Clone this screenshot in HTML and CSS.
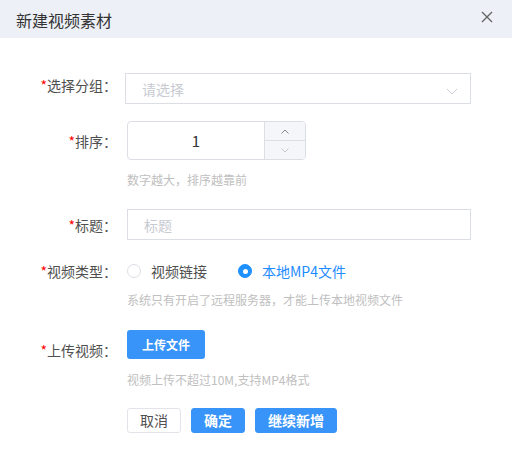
FILE: index.html
```html
<!DOCTYPE html>
<html lang="zh">
<head>
<meta charset="utf-8">
<link rel="stylesheet" href="styles.css">
</head>
<body>
<div class="dialog">
  <div class="header">
    <span class="title">新建视频素材</span>
    <svg class="close" width="12" height="12" viewBox="0 0 12 12"><path d="M1 1L11 11M11 1L1 11" stroke="#666" stroke-width="1.4" fill="none"/></svg>
  </div>
  <div class="form">
    <div class="item item-1">
      <label class="label label-1"><i>*</i>选择分组：</label>
      <div class="content">
        <div class="select">
          <span class="placeholder">请选择</span>
          <svg class="chev" width="12" height="7" viewBox="0 0 12 7"><path d="M1 1L6 6L11 1" stroke="#c9ccd4" stroke-width="1" fill="none"/></svg>
        </div>
      </div>
    </div>
    <div class="item item-2">
      <label class="label label-2"><i>*</i>排序：</label>
      <div class="content">
        <div class="number">
          <span class="num-val">1</span>
          <div class="spin">
            <div class="spin-btn"><svg width="8" height="5" viewBox="0 0 8 5"><path d="M0.5 4.5L4 1L7.5 4.5" stroke="#888" stroke-width="1" fill="none"/></svg></div>
            <div class="spin-btn spin-down"><svg width="8" height="5" viewBox="0 0 8 5"><path d="M0.5 0.5L4 4L7.5 0.5" stroke="#c6c9d0" stroke-width="1" fill="none"/></svg></div>
          </div>
        </div>
        <div class="hint hint-a">数字越大，排序越靠前</div>
      </div>
    </div>
    <div class="item item-3">
      <label class="label label-3"><i>*</i>标题：</label>
      <div class="content">
        <div class="input"><span class="placeholder">标题</span></div>
      </div>
    </div>
    <div class="item item-4">
      <label class="label label-4"><i>*</i>视频类型：</label>
      <div class="content">
        <div class="radios">
          <span class="radio"><span class="dot"></span><span class="rtext">视频链接</span></span>
          <span class="radio checked"><span class="dot"></span><span class="rtext">本地MP4文件</span></span>
        </div>
        <div class="hint hint-b">系统只有开启了远程服务器，才能上传本地视频文件</div>
      </div>
    </div>
    <div class="item item-5">
      <label class="label label-5"><i>*</i>上传视频：</label>
      <div class="content">
        <button class="btn-upload">上传文件</button>
        <div class="hint hint-c">视频上传不超过10M,支持MP4格式</div>
      </div>
    </div>
    <div class="actions">
      <button class="btn btn-default">取消</button>
      <button class="btn btn-primary">确定</button>
      <button class="btn btn-primary">继续新增</button>
    </div>
  </div>
</div>
</body>
</html>
```

FILE: styles.css
```css
* { box-sizing: border-box; margin: 0; padding: 0; }
html, body { background: #fff; }
body {
  font-family: "Noto Sans CJK SC", "Noto Sans", sans-serif;
  color: #606266;
  width: 512px;
  height: 458px;
  overflow: hidden;
}
.header {
  height: 38px;
  background: #edf0f7;
  display: flex;
  align-items: center;
  justify-content: space-between;
  padding: 0 19px 0 16px;
}
.title {
  font-size: 16px;
  color: #333;
  line-height: 38px;
  margin-top: 1px;
}
.close { margin-top: -5px; }
.form { padding-top: 35px; }
.item { display: flex; align-items: flex-start; }
.label {
  width: 117px;
  text-align: right;
  font-size: 14px;
  color: #4f4f4f;
  margin-right: 10px;
  flex: none;
}
.label i { font-style: normal; color: #f00; font-size: 14px; }
.content { display: flex; flex-direction: column; align-items: flex-start; }
.item-1 { margin-bottom: 17px; }
.label-1 { line-height: 24px; }
.select {
  margin-left: -2px;
  width: 346px;
  height: 31px;
  border: 1px solid #dcdee6;
  display: flex;
  align-items: center;
  justify-content: space-between;
  padding: 0 12px 0 16px;
}
.placeholder { font-size: 14px; color: #c8cad2; }
.chev { margin-top: 6px; }
.item-2 { margin-bottom: 19px; }
.label-2 { line-height: 41px; }
.number {
  width: 179px;
  height: 39px;
  border: 1px solid #dcdee6;
  border-radius: 4px;
  display: flex;
  overflow: hidden;
}
.num-val {
  flex: 1;
  text-align: center;
  line-height: 37px;
  font-size: 15px;
  color: #333;
}
.spin {
  width: 41px;
  border-left: 1px solid #dcdee6;
  background: #f5f6fa;
  display: flex;
  flex-direction: column;
}
.spin-btn {
  flex: 1;
  display: flex;
  align-items: center;
  justify-content: center;
}
.spin-down { border-top: 1px solid #dcdee6; }
.hint {
  font-size: 12px;
  color: #c0c0c0;
  line-height: 20px;
}
.hint-a { margin-top: 10px; }
.item-3 { margin-bottom: 15px; }
.label-3 { line-height: 32px; }
.input {
  width: 344px;
  height: 31px;
  border: 1px solid #dcdee6;
  display: flex;
  align-items: center;
  padding-left: 16px;
}
.item-4 { margin-bottom: 20px; }
.label-4 { line-height: 31px; }
.radios { display: flex; height: 30px; align-items: center; }
.radio { display: flex; align-items: center; margin-right: 31px; }
.dot {
  width: 14px;
  height: 14px;
  border: 1px solid #dcdee6;
  border-radius: 50%;
  margin-right: 10px;
  background: #fff;
  position: relative;
}
.rtext { font-size: 14px; color: #4f4f4f; line-height: 30px; }
.checked .dot { background: #1e90ff; border-color: #1e90ff; }
.checked .dot::after {
  content: "";
  position: absolute;
  width: 5px;
  height: 5px;
  border-radius: 50%;
  background: #fff;
  left: 3.5px;
  top: 3.5px;
}
.checked .rtext { color: #1e8cff; }
.hint-b { margin-top: 4px; }
.item-5 { margin-bottom: 18px; }
.label-5 { line-height: 40px; }
button { font-family: inherit; cursor: pointer; }
.btn-upload {
  width: 78px;
  height: 29px;
  border: none;
  border-radius: 3px;
  background: #3894f8;
  color: #fff;
  font-size: 12px;
  font-weight: bold;
}
.hint-c { margin-top: 11px; }
.actions { display: flex; gap: 10px; padding-left: 127px; }
.btn {
  height: 25px;
  padding: 0 12px;
  border-radius: 3px;
  font-size: 14px;
  line-height: 23px;
}
.btn-default { border: 1px solid #e2e4ea; background: #fff; color: #4f4f4f; }
.btn-primary { border: 1px solid #3894f8; background: #3894f8; color: #fff; font-weight: bold; }
```
